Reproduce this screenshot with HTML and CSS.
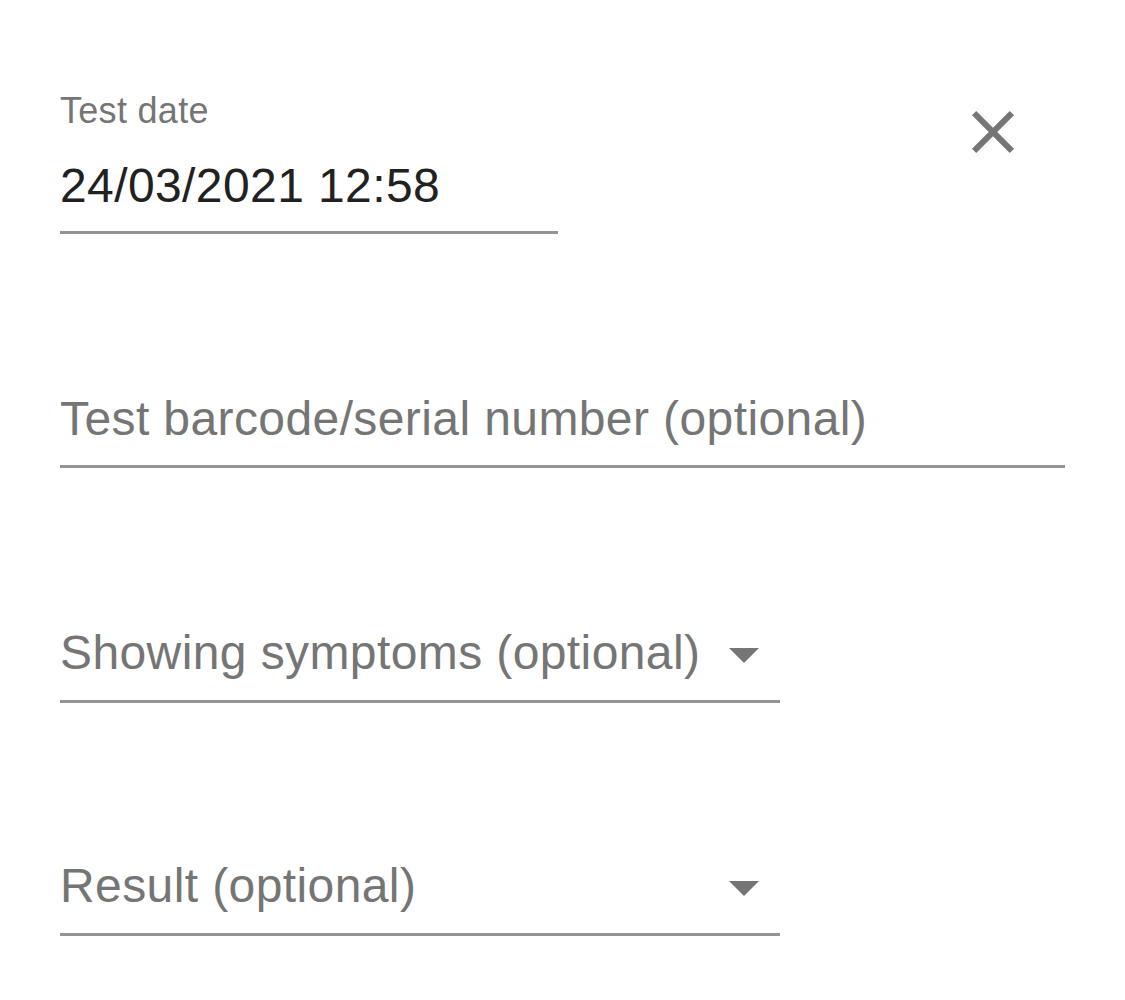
FILE: index.html
```html
<!DOCTYPE html>
<html lang="en">
<head>
<meta charset="utf-8">
<title>Test form</title>
<link rel="stylesheet" href="styles.css">
</head>
<body>
<main class="form">
  <div class="header-row">
    <div class="field field-date">
      <div class="label">Test date</div>
      <div class="value">24/03/2021 12:58</div>
    </div>
    <button class="close" aria-label="Close">
      <svg viewBox="0 0 24 24" width="72" height="72"><path d="M19 6.41L17.59 5 12 10.59 6.41 5 5 6.41 10.59 12 5 17.59 6.41 19 12 13.41 17.59 19 19 17.59 13.41 12z" fill="#757575"/></svg>
    </button>
  </div>
  <div class="field field-barcode">
    <div class="placeholder">Test barcode/serial number (optional)</div>
  </div>
  <div class="field field-select field-symptoms">
    <div class="placeholder">Showing symptoms (optional)</div>
    <svg class="arrow" viewBox="0 0 24 24" width="72" height="72"><path d="M7 10l5 5 5-5z" fill="#757575"/></svg>
  </div>
  <div class="field field-select field-result">
    <div class="placeholder">Result (optional)</div>
    <svg class="arrow" viewBox="0 0 24 24" width="72" height="72"><path d="M7 10l5 5 5-5z" fill="#757575"/></svg>
  </div>
</main>
</body>
</html>
```

FILE: styles.css
```css
html, body {
  margin: 0;
  padding: 0;
  background: #ffffff;
}
body {
  font-family: "Liberation Sans", Arial, Helvetica, sans-serif;
}
.form {
  width: 1005px;
  padding: 93px 0 0 60px;
}
.header-row {
  display: flex;
  justify-content: space-between;
  align-items: flex-start;
}
.close {
  margin: 3px 36px 0 0;
  padding: 0;
  border: 0;
  background: none;
  width: 72px;
  height: 72px;
  display: block;
}
.close svg {
  display: block;
}
.field {
  position: relative;
  border-bottom: 3px solid #949494;
}
.label {
  font-size: 36px;
  line-height: 36px;
  letter-spacing: 0.3px;
  color: #757575;
}
.value {
  font-size: 48px;
  line-height: 57px;
  letter-spacing: 0.4px;
  color: #212121;
  padding: 28px 0 17px;
}
.placeholder {
  font-size: 48px;
  line-height: 57px;
  letter-spacing: 0.4px;
  color: #757575;
  white-space: nowrap;
}
.field-date {
  width: 498px;
}
.field-barcode {
  width: 1005px;
  margin-top: 156px;
  padding-bottom: 18px;
}
.field-select {
  width: 720px;
  padding-bottom: 19px;
}
.field-symptoms {
  margin-top: 156px;
}
.field-result {
  margin-top: 154px;
}
.arrow {
  position: absolute;
  right: 0;
  bottom: 10px;
  display: block;
}
```
